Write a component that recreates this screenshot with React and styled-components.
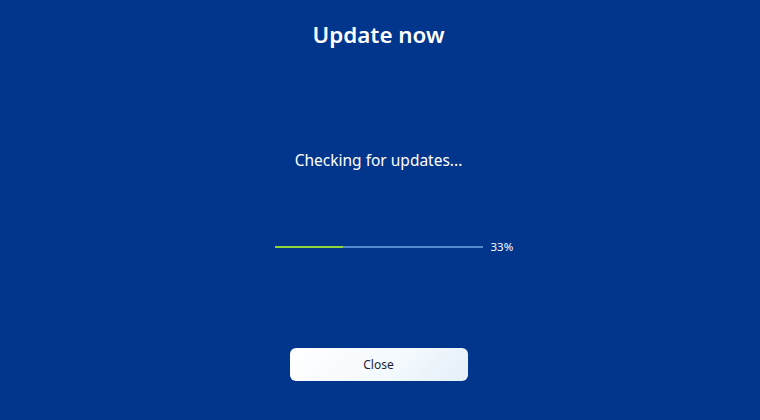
import React from "react";
import styled, { createGlobalStyle } from "styled-components";

const Global = createGlobalStyle`
  html, body { margin: 0; padding: 0; }
  body { background: #02358c; }
  #root { width: 760px; height: 420px; }
`;

const Screen = styled.div`
  width: 760px;
  height: 420px;
  box-sizing: border-box;
  padding: 19px 3px 0 0;
  background: #02358c;
  display: flex;
  flex-direction: column;
  align-items: center;
  font-family: "Noto Sans", "Open Sans", sans-serif;
  color: #ffffff;
  overflow: hidden;
`;

const Title = styled.h1`
  margin: 0;
  font-size: 22.4px;
  line-height: 32px;
  font-weight: 600;
`;

const Status = styled.p`
  margin: 98px 0 0;
  font-size: 15.5px;
  line-height: 22px;
  font-weight: 400;
`;

const ProgressRow = styled.div`
  margin-top: 69px;
  width: 100%;
  height: 14px;
  display: grid;
  grid-template-columns: 1fr 208px 1fr;
  align-items: center;
`;

const Track = styled.div`
  grid-column: 2;
  height: 2px;
  background: #5389cf;
  overflow: hidden;
`;

const Fill = styled.div`
  height: 100%;
  background: #8fd63a;
`;

const Percent = styled.span`
  grid-column: 3;
  justify-self: start;
  padding-left: 8px;
  font-size: 11.5px;
  line-height: 14px;
`;

const Button = styled.button`
  margin-top: 94px;
  width: 178px;
  height: 33px;
  border: none;
  border-radius: 6px;
  background: linear-gradient(135deg, #ffffff 0%, #f3f9fd 60%, #e4eff9 100%);
  color: #1d1f33;
  font-family: "Noto Sans", "Open Sans", sans-serif;
  font-size: 12px;
  font-weight: 400;
  cursor: pointer;
`;

export default function App() {
  const progress = 33;
  return (
    <>
      <Global />
      <Screen>
        <Title>Update now</Title>
        <Status>Checking for updates...</Status>
        <ProgressRow>
          <Track>
            <Fill style={{ width: `${progress}%` }} />
          </Track>
          <Percent>{progress}%</Percent>
        </ProgressRow>
        <Button>Close</Button>
      </Screen>
    </>
  );
}
